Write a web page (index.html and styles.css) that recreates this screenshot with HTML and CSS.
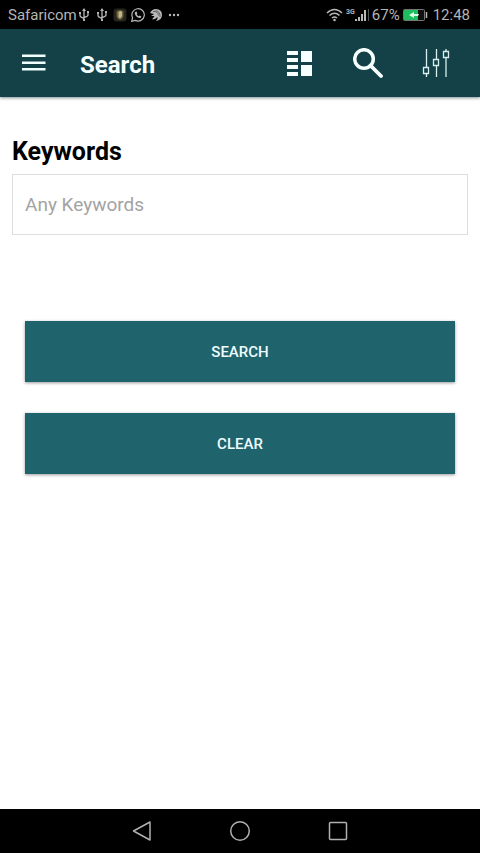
FILE: index.html
```
<!DOCTYPE html>
<html lang="en">
<head>
<meta charset="utf-8">
<meta name="viewport" content="width=device-width, initial-scale=1">
<title>Search</title>
<link rel="stylesheet" href="styles.css">
</head>
<body>
<div class="status">
  <div class="status-left">
    <span class="carrier">Safaricom</span>
    <div class="notifications">
      <svg width="14" height="14" viewBox="0 0 14 14" fill="none" stroke="#b4b4b4" stroke-width="1.3"><path d="M7 2v10M3 5v2.500q0 1.500 4 3M11 4v3q0 1.500-4 2.500"/><path d="M7 0l2 3H5zM2 4h2v2H2zM10 3h2v2h-2zM6 11h2v2H6z" fill="#b4b4b4" stroke="none"/></svg>
      <svg width="14" height="14" viewBox="0 0 14 14" fill="none" stroke="#b4b4b4" stroke-width="1.3"><path d="M7 2v10M3 5v2.500q0 1.500 4 3M11 4v3q0 1.500-4 2.500"/><path d="M7 0l2 3H5zM2 4h2v2H2zM10 3h2v2h-2zM6 11h2v2H6z" fill="#b4b4b4" stroke="none"/></svg>
      <svg width="14" height="14" viewBox="0 0 14 14"><rect x=".5" y=".5" width="13" height="13" rx="3" fill="#25251d"/><path d="M3.500 3L7 2l3.500 1v4.500q0 3-3.500 4.500-3.500-1.500-3.500-4.500z" fill="#6b6341"/><path d="M5.500 4L7.500 3l1.500 1v4L7 10.500 5.500 9z" fill="#c3b78a"/></svg>
      <svg width="14" height="14" viewBox="0 0 14 14" fill="none" stroke="#b8b8b8" stroke-width="1.2"><path d="M.7 13.300l.9-3.600A6.200 6.200 0 1 1 4.300 12.400z"/><path d="M4.500 3.800l1-.3.900 2-.7.800q.7 1.500 2.100 2l.9-.8 1.700.9q-.2 1.700-1.900 1.700-3.800-.8-4.700-4.500-.1-1.200.7-1.800z" fill="#b8b8b8" stroke="none"/></svg>
      <svg width="14" height="14" viewBox="0 0 14 14"><path d="M1 5Q3 1 7 1q6 .5 6 6 0 5-6 6 2-2 1.500-4L6 11l-3 .5L5.500 8 2 8l3-2z" fill="#b8b8b8"/><path d="M4 3.500q5-.5 5.500 4M6.500 2.500q5 1 4.500 6.500" fill="none" stroke="#222" stroke-width=".6"/></svg>
      <svg width="14" height="14" viewBox="0 0 14 14" fill="#b8b8b8"><circle cx="3" cy="7" r="1.200"/><circle cx="7" cy="7" r="1.200"/><circle cx="11" cy="7" r="1.200"/></svg>
    </div>
  </div>
  <div class="status-right">
    <svg width="17" height="14" viewBox="0 0 17 14" fill="none" stroke="#b8b8b8" stroke-width="1.500"><path d="M1 5Q8.500-2 16 5M3.500 7.500q5-4.500 10 0M6 10q2.500-2 5 0"/><circle cx="8.500" cy="12" r="1.300" fill="#b8b8b8" stroke="none"/></svg>
    <span class="network"><span class="gen">3G</span><svg width="14" height="14" viewBox="0 0 14 14"><path d="M0 11h2v2H0zM3 9h2v4H3zM6 6h2v7H6zM9 2h2v11H9z" fill="#b8b8b8"/><path d="M13 1h1v12h-1z" fill="#555"/></svg></span>
    <span class="percent">67%</span>
    <svg class="battery" width="25" height="14" viewBox="0 0 25 14"><rect x=".5" y="1.500" width="21" height="11" rx="1" fill="#101010" stroke="#777"/><path d="M1 2h14v10H1z" fill="#20bd60"/><path d="M6 7l5-3v2h5l-1 2h-4v2z" fill="#d9ffe5"/><path d="M23.500 4v6" stroke="#b8b8b8" stroke-width="1.500"/></svg>
    <span class="clock">12:48</span>
  </div>
</div>
<header class="appbar">
  <button class="icon-button" aria-label="Menu"><svg width="24" height="18" viewBox="0 0 24 18" fill="#f2ffff"><path d="M0 .5h23.500V3H0zM0 7.500h23.500V10H0zM0 14h23.500v2.500H0z"/></svg></button>
  <h1>Search</h1>
  <nav class="actions">
    <button class="icon-button" aria-label="List view"><svg width="26" height="26" viewBox="0 0 26 26" fill="#f8ffff"><path d="M0 1h11v4H0zM0 8h11v4H0zM0 15h11v4H0zM0 22h11v4H0zM14 1h11v11H14zM14 15h11v11H14z"/></svg></button>
    <button class="icon-button" aria-label="Find"><svg width="30" height="30" viewBox="0 0 30 30" fill="none" stroke="#f8ffff"><circle cx="11" cy="11" r="9.300" stroke-width="3.500"/><path d="M17.500 17.500L28 28" stroke-width="3.800" stroke-linecap="round"/></svg></button>
    <button class="icon-button" aria-label="Filters"><svg width="28" height="30" viewBox="0 0 28 30" fill="none" stroke="#d8eeee" stroke-width="1.300"><path d="M4.500 1v18M4.500 26v3M14.500 1v10M14.500 18v11M24 1v2M24 10v19"/><path d="M1.500 19.500h5v6h-5zM11.500 11.500h5v6h-5zM21.500 3.500h5v6h-5z"/></svg></button>
  </nav>
</header>
<main>
  <form class="search-form">
    <label for="keywords">Keywords</label>
    <input id="keywords" type="text" placeholder="Any Keywords">
    <div class="buttons">
      <button class="submit" type="button">SEARCH</button>
      <button class="submit" type="reset">CLEAR</button>
    </div>
  </form>
</main>
<footer class="navbar">
  <button aria-label="Back"><svg width="22" height="22" viewBox="0 0 22 22"><path d="M19 2v18L2.500 11z"/></svg></button>
  <button aria-label="Home"><svg width="22" height="22" viewBox="0 0 22 22"><circle cx="11" cy="11" r="9.300"/></svg></button>
  <button aria-label="Recent apps"><svg width="22" height="22" viewBox="0 0 22 22"><rect x="2.500" y="2.500" width="17" height="17" rx="1"/></svg></button>
</footer>
</body>
</html>
```
FILE: styles.css
```
* {
  box-sizing: border-box;
}

body {
  margin: 0;
  min-height: 100vh;
  display: flex;
  flex-direction: column;
  background: #fff;
  font-family: Roboto, sans-serif;
}

button {
  border: 0;
  padding: 0;
  background: none;
  font-family: inherit;
}

svg {
  display: block;
}

.status {
  display: flex;
  justify-content: space-between;
  align-items: center;
  height: 29px;
  padding: 0 10px 0 8px;
  background: #000;
  color: #b4b4b4;
  font-size: 15px;
}

.status-left,
.status-right,
.notifications {
  display: flex;
  align-items: center;
}

.notifications {
  gap: 4px;
}

.status-right {
  gap: 3px;
}

.network {
  display: flex;
}

.gen {
  font-size: 7px;
  line-height: 8px;
  font-weight: 700;
}

.battery {
  margin-right: 2px;
}

.appbar {
  display: flex;
  align-items: center;
  height: 68px;
  padding-right: 10px;
  background: #134147;
  box-shadow: 0 1px 3px rgba(0, 30, 35, 0.5);
}

.appbar h1 {
  margin: 0 0 0 12px;
  padding-top: 4px;
  color: #f5ffff;
  font-size: 24px;
  line-height: 28px;
}

.actions {
  display: flex;
  margin-left: auto;
}

.icon-button {
  display: flex;
  align-items: center;
  justify-content: center;
  width: 68px;
  height: 68px;
}

main {
  flex: 1;
}

.search-form {
  display: flex;
  flex-direction: column;
  padding: 40px 12px;
}

.search-form label {
  margin-bottom: 7px;
  color: #000;
  font-size: 25px;
  line-height: 30px;
  font-weight: 700;
}

.search-form input {
  width: 100%;
  height: 61px;
  padding: 0 12px;
  border: 1px solid #dedede;
  border-radius: 0;
  background: #fff;
  color: #222;
  font-family: inherit;
  font-size: 19px;
}

.search-form input::placeholder {
  color: #a3a3a3;
  opacity: 1;
}

.buttons {
  display: flex;
  flex-direction: column;
  gap: 31px;
  padding: 86px 13px 0;
}

.submit {
  height: 61px;
  background: #1f636c;
  color: #effdff;
  font-size: 15px;
  font-weight: 500;
  box-shadow: 0 1px 3px rgba(0, 0, 0, 0.4);
}

.navbar {
  display: flex;
  justify-content: center;
  align-items: center;
  gap: 76px;
  height: 44px;
  background: #000;
}

.navbar svg {
  fill: none;
  stroke: #b0b0b0;
  stroke-width: 1.5;
  stroke-linejoin: round;
}
```
